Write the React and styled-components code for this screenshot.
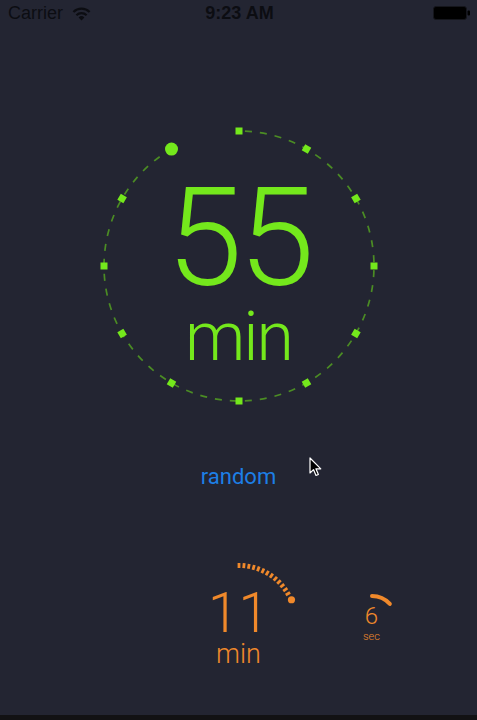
import React from "react";
import styled, { createGlobalStyle } from "styled-components";

const GlobalStyle = createGlobalStyle`
  html, body {
    margin: 0;
    padding: 0;
    background: #232532;
  }
  body {
    font-family: Roboto, "Liberation Sans", sans-serif;
  }
`;

const GREEN = "#74e81c";
const GREEN_DIM = "#4b8c24";
const ORANGE = "#f0892b";
const BLUE = "#1d7fe6";

const polar = (cx, cy, r, deg) => {
  const a = (deg * Math.PI) / 180;
  return [cx + r * Math.sin(a), cy - r * Math.cos(a)];
};

const Page = styled.div`
  width: 477px;
  height: 720px;
  display: flex;
  flex-direction: column;
  background: #232532;
  position: relative;
  overflow: hidden;
`;

const StatusBar = styled.div`
  height: 20px;
  display: grid;
  grid-template-columns: 1fr auto 1fr;
  align-items: center;
  padding: 0 6px 0 8px;
  color: #0c0d12;
  font-family: "Liberation Sans", Arial, sans-serif;
  font-size: 18px;
`;

const Carrier = styled.div`
  display: flex;
  align-items: center;
  gap: 9px;
  margin-top: 3px;
`;

const Clock = styled.div`
  font-weight: bold;
  margin-top: 3px;
`;

const BatteryWrap = styled.div`
  justify-self: end;
  display: flex;
  align-items: center;
  margin-top: 2px;
`;

const Main = styled.main`
  flex: 1;
  display: flex;
  flex-direction: column;
  align-items: center;
`;

const Stack = styled.div`
  display: grid;
  width: ${(p) => p.size}px;
  height: ${(p) => p.size}px;
  & > * {
    grid-area: 1 / 1;
  }
`;

const DialStack = styled(Stack)`
  margin-top: 101px;
`;

const Readout = styled.div`
  display: flex;
  flex-direction: column;
  align-items: center;
  color: ${(p) => p.color};
  font-weight: 300;
  padding-top: ${(p) => p.top}px;
`;

const BigNumber = styled.div`
  font-size: ${(p) => p.size}px;
  line-height: 0.8;
  letter-spacing: ${(p) => p.spacing || 0}px;
`;

const Unit = styled.div`
  font-size: ${(p) => p.size}px;
  line-height: 0.85;
  letter-spacing: ${(p) => p.spacing || 0}px;
  margin-top: ${(p) => p.gap}px;
`;

const RandomLink = styled.a`
  margin-top: 55px;
  font-size: 22px;
  line-height: 1;
  color: ${BLUE};
  text-decoration: none;
  cursor: pointer;
`;

const TimerRow = styled.div`
  width: 100%;
  margin-top: 69px;
  display: grid;
  grid-template-columns: 1fr auto 1fr;
  align-items: start;
`;

const SmallSlot = styled.div`
  padding-left: 38px;
  padding-top: 33px;
`;

const BottomStrip = styled.div`
  height: 5px;
  background: #121214;
`;

const Pointer = styled.svg`
  position: absolute;
  left: 309px;
  top: 457px;
`;

const WifiIcon = () => (
  <svg width="19" height="14" viewBox="0 0 19 14">
    <path d="M9.5 13.5 L6.6 10.4 A4.2 4.2 0 0 1 12.4 10.4 Z" fill="#0c0d12" />
    <path
      d="M4.4 8.2 A7.3 7.3 0 0 1 14.6 8.2"
      stroke="#0c0d12"
      strokeWidth="2.2"
      fill="none"
    />
    <path
      d="M1.4 5.1 A11.4 11.4 0 0 1 17.6 5.1"
      stroke="#0c0d12"
      strokeWidth="2.2"
      fill="none"
    />
  </svg>
);

const Battery = () => (
  <svg width="38" height="15" viewBox="0 0 38 15">
    <rect x="0.5" y="0.5" width="33" height="13" rx="2.5" fill="#000" stroke="#15161c" />
    <rect x="34.5" y="4.5" width="2.5" height="5" rx="1" fill="#000" />
  </svg>
);

const MainDial = () => {
  const c = 145;
  const r = 135;
  const [ex, ey] = polar(c, c, r, 330);
  const [sx, sy] = polar(c, c, r, 0);
  const ticks = [];
  for (let d = 0; d <= 300; d += 30) {
    const [x, y] = polar(c, c, r, d);
    ticks.push(
      <rect
        key={d}
        x={x - 3.5}
        y={y - 3.5}
        width="7"
        height="7"
        fill={GREEN}
        transform={`rotate(${d} ${x} ${y})`}
      />
    );
  }
  const [kx, ky] = polar(c, c, r, 330);
  return (
    <svg width="290" height="290" viewBox="0 0 290 290">
      <path
        d={`M${sx} ${sy} A${r} ${r} 0 1 1 ${ex} ${ey}`}
        fill="none"
        stroke={GREEN_DIM}
        strokeWidth="1.7"
        strokeDasharray="7 8"
        strokeDashoffset="-6"
      />
      {ticks}
      <circle cx={kx} cy={ky} r="6.5" fill={GREEN} />
    </svg>
  );
};

const MinuteDial = () => {
  const c = 65;
  const ticks = [];
  for (let d = 0; d <= 60; d += 5) {
    const [x1, y1] = polar(c, c, 54, d);
    const [x2, y2] = polar(c, c, 59, d);
    ticks.push(
      <line
        key={d}
        x1={x1}
        y1={y1}
        x2={x2}
        y2={y2}
        stroke={ORANGE}
        strokeWidth="2.8"
      />
    );
  }
  const [kx, ky] = polar(c, c, 57, 67);
  return (
    <svg width="130" height="130" viewBox="0 0 130 130">
      {ticks}
      <circle cx={kx} cy={ky} r="3.6" fill={ORANGE} />
    </svg>
  );
};

const SecondDial = () => {
  const c = 30;
  const r = 24;
  const [sx, sy] = polar(c, c, r, 0);
  const [ex, ey] = polar(c, c, r, 48);
  return (
    <svg width="60" height="60" viewBox="0 0 60 60">
      <path
        d={`M${sx} ${sy} A${r} ${r} 0 0 1 ${ex} ${ey}`}
        fill="none"
        stroke={ORANGE}
        strokeWidth="4"
        strokeLinecap="round"
      />
    </svg>
  );
};

export default function App() {
  return (
    <Page>
      <GlobalStyle />
      <StatusBar>
        <Carrier>
          Carrier
          <WifiIcon />
        </Carrier>
        <Clock>9:23 AM</Clock>
        <BatteryWrap>
          <Battery />
        </BatteryWrap>
      </StatusBar>

      <Main>
        <DialStack size={290}>
          <MainDial />
          <Readout color={GREEN} top={63}>
            <BigNumber size={137} spacing={-4}>
              55
            </BigNumber>
            <Unit size={68} spacing={-2} gap={15}>
              min
            </Unit>
          </Readout>
        </DialStack>

        <RandomLink>random</RandomLink>

        <TimerRow>
          <div />
          <Stack size={130}>
            <MinuteDial />
            <Readout color={ORANGE} top={34}>
              <BigNumber size={55}>11</BigNumber>
              <Unit size={27} gap={8}>
                min
              </Unit>
            </Readout>
          </Stack>
          <SmallSlot>
            <Stack size={60}>
              <SecondDial />
              <Readout color={ORANGE} top={17}>
                <BigNumber size={24}>6</BigNumber>
                <Unit size={11} gap={6}>
                  sec
                </Unit>
              </Readout>
            </Stack>
          </SmallSlot>
        </TimerRow>
      </Main>

      <BottomStrip />

      <Pointer width="13" height="20" viewBox="0 0 13 20">
        <path
          d="M1 1 L1 16 L4.5 12.6 L7 18.5 L9.4 17.5 L6.9 11.8 L11.8 11.8 Z"
          fill="#000"
          stroke="#fff"
          strokeWidth="1.2"
          strokeLinejoin="round"
        />
      </Pointer>
    </Page>
  );
}
